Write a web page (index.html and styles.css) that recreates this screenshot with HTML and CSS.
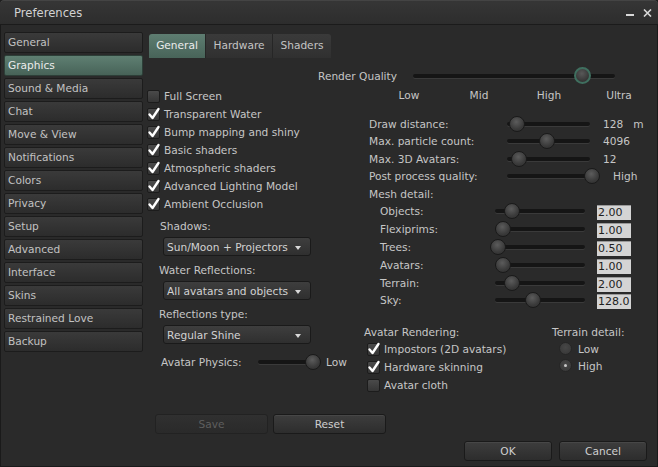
FILE: index.html
```html
<!DOCTYPE html>
<html>
<head>
<meta charset="utf-8">
<link rel="stylesheet" href="styles.css">
</head>
<body>
<div class="window">
  <div class="titlebar">
    <span class="title">Preferences</span>
    <div class="controls">
      <svg class="ctl-min" width="8" height="3" viewBox="0 0 8 3"><rect x="0" y="0" width="8" height="2" fill="#d8d8d8"/></svg>
      <svg class="ctl-close" width="9" height="8" viewBox="0 0 9 8"><path d="M1 0.5 L8 7.5 M8 0.5 L1 7.5" stroke="#d8d8d8" stroke-width="1.6"/></svg>
    </div>
  </div>
  <div class="body">
    <nav class="sidebar">
      <div class="navitem">General</div>
      <div class="navitem active">Graphics</div>
      <div class="navitem">Sound &amp; Media</div>
      <div class="navitem">Chat</div>
      <div class="navitem">Move &amp; View</div>
      <div class="navitem">Notifications</div>
      <div class="navitem">Colors</div>
      <div class="navitem">Privacy</div>
      <div class="navitem">Setup</div>
      <div class="navitem">Advanced</div>
      <div class="navitem">Interface</div>
      <div class="navitem">Skins</div>
      <div class="navitem">Restrained Love</div>
      <div class="navitem">Backup</div>
    </nav>
    <main class="main">
      <div class="tabs">
        <div class="tab active t-general">General</div>
        <div class="tab t-hardware">Hardware</div>
        <div class="tab t-shaders">Shaders</div>
      </div>
      <div class="grid">
        <div class="left">
          <div class="checks">
            <label class="check"><span class="box"></span>Full Screen</label>
            <label class="check"><span class="box on"><svg width="14" height="14" viewBox="0 0 14 14"><path d="M2.5 7.5 L5.5 11 L11.5 2" fill="none" stroke="#fff" stroke-width="2.4" stroke-linecap="round" stroke-linejoin="round"/></svg></span>Transparent Water</label>
            <label class="check"><span class="box on"><svg width="14" height="14" viewBox="0 0 14 14"><path d="M2.5 7.5 L5.5 11 L11.5 2" fill="none" stroke="#fff" stroke-width="2.4" stroke-linecap="round" stroke-linejoin="round"/></svg></span>Bump mapping and shiny</label>
            <label class="check"><span class="box on"><svg width="14" height="14" viewBox="0 0 14 14"><path d="M2.5 7.5 L5.5 11 L11.5 2" fill="none" stroke="#fff" stroke-width="2.4" stroke-linecap="round" stroke-linejoin="round"/></svg></span>Basic shaders</label>
            <label class="check"><span class="box on"><svg width="14" height="14" viewBox="0 0 14 14"><path d="M2.5 7.5 L5.5 11 L11.5 2" fill="none" stroke="#fff" stroke-width="2.4" stroke-linecap="round" stroke-linejoin="round"/></svg></span>Atmospheric shaders</label>
            <label class="check"><span class="box on"><svg width="14" height="14" viewBox="0 0 14 14"><path d="M2.5 7.5 L5.5 11 L11.5 2" fill="none" stroke="#fff" stroke-width="2.4" stroke-linecap="round" stroke-linejoin="round"/></svg></span>Advanced Lighting Model</label>
            <label class="check"><span class="box on"><svg width="14" height="14" viewBox="0 0 14 14"><path d="M2.5 7.5 L5.5 11 L11.5 2" fill="none" stroke="#fff" stroke-width="2.4" stroke-linecap="round" stroke-linejoin="round"/></svg></span>Ambient Occlusion</label>
          </div>
          <div class="field-label first">Shadows:</div>
          <div class="dropdown"><span>Sun/Moon + Projectors</span><span class="arrow"></span></div>
          <div class="field-label">Water Reflections:</div>
          <div class="dropdown"><span>All avatars and objects</span><span class="arrow"></span></div>
          <div class="field-label">Reflections type:</div>
          <div class="dropdown"><span>Regular Shine</span><span class="arrow"></span></div>
          <div class="physics">
            <span class="physics-label">Avatar Physics:</span>
            <div class="track physics-track"><span class="knob" style="left:47px"></span></div>
            <span class="physics-value">Low</span>
          </div>
        </div>

        <div class="quality">
          <div class="quality-row">
            <span class="quality-label">Render Quality</span>
            <div class="track quality-track"><span class="knob ring" style="left:161px"></span></div>
          </div>
          <div class="quality-ticks">
            <span>Low</span><span>Mid</span><span>High</span><span>Ultra</span>
          </div>
        </div>

        <div class="right">
          <div class="srow">
            <span class="slabel">Draw distance:</span>
            <div class="track strack"><span class="knob" style="left:2px"></span></div>
            <span class="sval">128&nbsp;&nbsp;&nbsp;m</span>
          </div>
          <div class="srow">
            <span class="slabel">Max. particle count:</span>
            <div class="track strack"><span class="knob" style="left:32px"></span></div>
            <span class="sval">4096</span>
          </div>
          <div class="srow">
            <span class="slabel">Max. 3D Avatars:</span>
            <div class="track strack"><span class="knob" style="left:4px"></span></div>
            <span class="sval">12</span>
          </div>
          <div class="srow">
            <span class="slabel">Post process quality:</span>
            <div class="track strack"><span class="knob" style="left:77px"></span></div>
            <span class="sval wide">High</span>
          </div>
          <div class="srow"><span class="slabel">Mesh detail:</span></div>
          <div class="mesh">
            <div class="mrow"><span class="mlabel">Objects:</span><div class="track mtrack"><span class="knob" style="left:9px"></span></div><span class="mval">2.00</span></div>
            <div class="mrow"><span class="mlabel">Flexiprims:</span><div class="track mtrack"><span class="knob" style="left:0px"></span></div><span class="mval">1.00</span></div>
            <div class="mrow"><span class="mlabel">Trees:</span><div class="track mtrack"><span class="knob" style="left:-5px"></span></div><span class="mval">0.50</span></div>
            <div class="mrow"><span class="mlabel">Avatars:</span><div class="track mtrack"><span class="knob" style="left:0px"></span></div><span class="mval">1.00</span></div>
            <div class="mrow"><span class="mlabel">Terrain:</span><div class="track mtrack"><span class="knob" style="left:9px"></span></div><span class="mval">2.00</span></div>
            <div class="mrow"><span class="mlabel">Sky:</span><div class="track mtrack"><span class="knob" style="left:30px"></span></div><span class="mval">128.0</span></div>
          </div>
          <div class="bottom">
            <div class="avrender">
              <div class="group-label">Avatar Rendering:</div>
              <label class="check"><span class="box on"><svg width="14" height="14" viewBox="0 0 14 14"><path d="M2.5 7.5 L5.5 11 L11.5 2" fill="none" stroke="#fff" stroke-width="2.4" stroke-linecap="round" stroke-linejoin="round"/></svg></span>Impostors (2D avatars)</label>
              <label class="check"><span class="box on"><svg width="14" height="14" viewBox="0 0 14 14"><path d="M2.5 7.5 L5.5 11 L11.5 2" fill="none" stroke="#fff" stroke-width="2.4" stroke-linecap="round" stroke-linejoin="round"/></svg></span>Hardware skinning</label>
              <label class="check"><span class="box"></span>Avatar cloth</label>
            </div>
            <div class="terrain">
              <div class="group-label">Terrain detail:</div>
              <label class="radio"><span class="dot"></span>Low</label>
              <label class="radio"><span class="dot on"></span>High</label>
            </div>
          </div>
        </div>
      </div>
      <div class="actions">
        <button class="btn disabled">Save</button>
        <button class="btn">Reset</button>
      </div>
    </main>
  </div>
  <div class="footer">
    <button class="btn footbtn">OK</button>
    <button class="btn footbtn">Cancel</button>
  </div>
</div>
</body>
</html>
```

FILE: styles.css
```css
* { box-sizing: border-box; }
html, body { margin: 0; padding: 0; background: #1e1e1e; }
body {
  font-family: "DejaVu Sans", "Liberation Sans", sans-serif;
  font-size: 10.6px;
  color: #c6c6c6;
}
.window {
  width: 658px;
  height: 467px;
  background: #2a2a2a;
  display: flex;
  flex-direction: column;
  border-radius: 4px 4px 0 0;
  box-shadow: inset 0 0 0 1px #1a1a1a;
  overflow: hidden;
}
.titlebar {
  height: 25px;
  flex: none;
  display: flex;
  align-items: center;
  justify-content: space-between;
  padding: 0 6px 0 14px;
  background: linear-gradient(#363636, #2d2d2d);
  border-bottom: 1px solid #1b1b1b;
  box-shadow: inset 0 1px 0 #444;
  border-radius: 4px 4px 0 0;
}
.title { font-size: 11.6px; color: #d2d2d2; padding-top: 1px; }
.controls { display: flex; align-items: flex-start; gap: 9px; height: 100%; }
.ctl-min { margin-top: 14px; }
.ctl-close { margin-top: 9px; }

.body {
  flex: 1;
  min-height: 0;
  display: flex;
  gap: 4px;
  padding: 7px 0 0 4px;
}
.sidebar { width: 139px; flex: none; display: flex; flex-direction: column; gap: 2px; }
.navitem {
  height: 21px;
  line-height: 19px;
  padding-left: 3px;
  border: 1px solid #1c1c1c;
  border-radius: 2px;
  background: linear-gradient(#3a3a3a, #2c2c2c);
  color: #c2c2c2;
  white-space: nowrap;
}
.navitem.active {
  background: linear-gradient(#5f7f72, #476358);
  border-color: #2d3f38;
  color: #ececec;
}

.main {
  flex: 1;
  display: flex;
  flex-direction: column;
  padding-bottom: 7px;
}
.tabs { display: flex; margin-left: 2px; margin-top: 2px; height: 24px; }
.tab {
  height: 24px;
  line-height: 23px;
  text-align: center;
  background: linear-gradient(#3a3a3a, #303030);
  border-right: 1px solid #262626;
  color: #c4c4c4;
}
.tab.active { background: linear-gradient(#5e7d71, #486459); color: #ececec; border-radius: 3px 0 0 0; }
.t-general { width: 57px; }
.t-hardware { width: 67px; }
.t-shaders { width: 58px; border-right: none; border-radius: 0 3px 0 0; }

.grid {
  margin-top: 10px;
  display: grid;
  grid-template-columns: 171px 44px 1fr;
  grid-template-rows: 34px auto;
}
.left { grid-column: 1 / 3; grid-row: 1 / 3; padding-top: 19px; display: flex; flex-direction: column; }
.quality { grid-column: 2 / 4; grid-row: 1; }
.right { grid-column: 3; grid-row: 2; padding-top: 13px; }

.check { display: flex; align-items: center; height: 18px; gap: 4px; white-space: nowrap; }
.box {
  position: relative;
  width: 13px; height: 13px;
  flex: none;
  border: 1px solid #1c1c1c;
  border-radius: 2px;
  background: linear-gradient(#4a4a4a, #353535);
}
.box svg { position: absolute; left: -1px; top: -2px; overflow: visible; }

.field-label { height: 14px; line-height: 14px; margin-top: 7px; padding-left: 12px; }
.field-label.first { margin-top: 6px; padding-left: 13px; }
.dropdown {
  margin-top: 4px;
  margin-left: 16px;
  width: 148px;
  height: 19px;
  display: flex;
  align-items: center;
  justify-content: space-between;
  padding: 0 9px 0 3px;
  border: 1px solid #1a1a1a;
  border-radius: 3px;
  background: linear-gradient(#3e3e3e, #2f2f2f);
  color: #d2d2d2;
  white-space: nowrap;
}
.arrow {
  width: 0; height: 0;
  border-left: 3.5px solid transparent;
  border-right: 3.5px solid transparent;
  border-top: 4px solid #d8d8d8;
  margin-top: 2px;
}
.physics { display: flex; align-items: center; height: 16px; margin-top: 10px; padding-left: 14px; }
.physics-label { width: 97px; flex: none; }
.physics-value { margin-left: 8px; }

.track { position: relative; height: 16px; flex: none; }
.track::before {
  content: "";
  position: absolute;
  left: 0; right: 0; top: 6px;
  height: 4px;
  border-radius: 2px;
  background: #151515;
  box-shadow: 0 1px 0 #3a3a3a;
}
.knob {
  position: absolute;
  top: 0;
  width: 16px; height: 16px;
  border-radius: 50%;
  border: 1px solid #1a1a1a;
  background: radial-gradient(circle at 45% 35%, #5c5c5c, #3a3a3a 60%, #2c2c2c);
}
.knob.ring { border: 2px solid #3f6f5f; background: radial-gradient(circle at 45% 35%, #585858, #383838 65%, #2c2c2c); width: 17px; height: 17px; top: -1px; }
.physics-track { width: 60px; }

.quality-row { display: flex; align-items: center; height: 16px; }
.quality-label { width: 95px; flex: none; white-space: nowrap; }
.quality-track { width: 202px; }
.quality-ticks { display: flex; margin-top: 4px; padding-left: 56px; height: 14px; line-height: 14px; }
.quality-ticks span { width: 70px; text-align: center; }

.srow { display: flex; align-items: center; height: 17.5px; padding-left: 7px; white-space: nowrap; }
.slabel { width: 138px; flex: none; }
.strack { width: 83px; }
.sval { margin-left: 13px; }
.sval.wide { margin-left: 23px; }

.mesh { display: flex; flex-direction: column; }
.mrow { display: flex; align-items: center; height: 17.8px; padding-left: 18px; white-space: nowrap; }
.mlabel { width: 115px; flex: none; }
.mtrack { width: 90px; }
.mval {
  margin-left: 12px;
  width: 34px;
  height: 15px;
  line-height: 14px;
  margin-top: 3px;
  padding-left: 1px;
  background: #d4d4d4;
  color: #1e1e1e;
  border-top: 1px solid #999;
  font-size: 11px;
}

.bottom { display: flex; margin-top: 15px; padding-left: 2px; }
.avrender { width: 188px; flex: none; }
.avrender .check { padding-left: 3px; }
.group-label { height: 16px; line-height: 16px; white-space: nowrap; }
.radio { display: flex; align-items: center; height: 17px; gap: 6px; padding-left: 7px; }
.dot {
  width: 13px; height: 13px;
  border-radius: 50%;
  background: radial-gradient(circle at 50% 40%, #474747, #363636);
  border: 1px solid #262626;
  display: flex; align-items: center; justify-content: center;
}
.dot.on::after { content: ""; width: 3px; height: 3px; border-radius: 50%; background: #c8c8c8; }

.actions { margin-top: auto; display: flex; gap: 5px; padding-left: 8px; }
.btn {
  font-family: "DejaVu Sans", "Liberation Sans", sans-serif;
  font-size: 10.6px;
  width: 113px;
  height: 20px;
  padding: 0;
  border: 1px solid #1a1a1a;
  border-radius: 3px;
  background: linear-gradient(#3d3d3d, #2d2d2d);
  color: #cfcfcf;
  box-shadow: inset 0 1px 0 #474747;
}
.btn.disabled { color: #5e5e5e; background: linear-gradient(#303030, #2a2a2a); box-shadow: none; border-color: #222; }
.footer { flex: none; display: flex; justify-content: flex-end; gap: 7px; padding: 0 11px 6px 0; }
.footbtn { width: 88px; }
```
